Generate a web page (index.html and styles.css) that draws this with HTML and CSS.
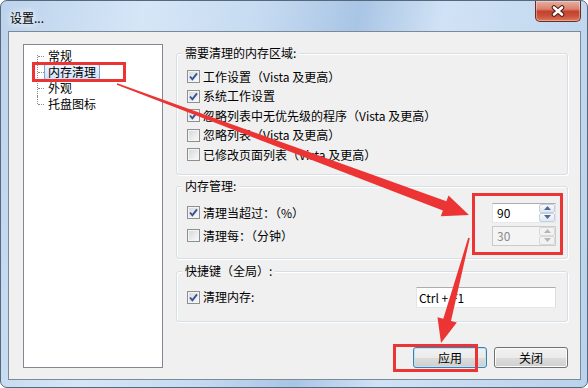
FILE: index.html
```html
<!DOCTYPE html>
<html lang="zh-CN">
<head>
    <meta charset="UTF-8">
    <meta name="viewport" content="width=device-width, initial-scale=1.0">
    <title>设置...</title>
    <link rel="stylesheet" href="styles.css">
</head>
<body>
    <div class="window">
        <div class="titlebar">
            <span class="title">设置...</span>
            <div class="close-btn">
                <svg width="16" height="12" viewBox="0 0 16 12">
                    <path d="M4 2.5 L12 9.5 M12 2.5 L4 9.5" stroke="#4a1d14" stroke-width="4.6" stroke-linecap="round"/>
                    <path d="M4 2.5 L12 9.5 M12 2.5 L4 9.5" stroke="#fff" stroke-width="2.6" stroke-linecap="round"/>
                </svg>
            </div>
        </div>

        <div class="client">
            <ul class="tree">
                <li><span>常规</span></li>
                <li><span class="selected">内存清理</span></li>
                <li><span>外观</span></li>
                <li><span>托盘图标</span></li>
            </ul>

            <div class="panel">
                <div class="group group-areas">
                    <div class="group-title">需要清理的内存区域:</div>
                    <div class="rows">
                        <div class="row"><span class="cb"><svg width="11" height="11" viewBox="0 0 11 11"><path d="M2 5.5 L4.4 8.3 L9 2.3" fill="none" stroke="#34529a" stroke-width="1.9"/></svg></span>工作设置（Vista 及更高）</div>
                        <div class="row"><span class="cb"><svg width="11" height="11" viewBox="0 0 11 11"><path d="M2 5.5 L4.4 8.3 L9 2.3" fill="none" stroke="#34529a" stroke-width="1.9"/></svg></span>系统工作设置</div>
                        <div class="row"><span class="cb"><svg width="11" height="11" viewBox="0 0 11 11"><path d="M2 5.5 L4.4 8.3 L9 2.3" fill="none" stroke="#34529a" stroke-width="1.9"/></svg></span>忽略列表中无优先级的程序（Vista 及更高）</div>
                        <div class="row"><span class="cb"></span>忽略列表（Vista 及更高）</div>
                        <div class="row"><span class="cb"></span>已修改页面列表（Vista 及更高）</div>
                    </div>
                </div>

                <div class="group group-memory">
                    <div class="group-title">内存管理:</div>
                    <div class="rows">
                        <div class="row"><span class="cb"><svg width="11" height="11" viewBox="0 0 11 11"><path d="M2 5.5 L4.4 8.3 L9 2.3" fill="none" stroke="#34529a" stroke-width="1.9"/></svg></span>清理当超过：（%）
                            <div class="spin">
                                <span class="spin-val">90</span>
                                <span class="spin-btns">
                                    <span><svg width="7" height="4" viewBox="0 0 7 4"><path d="M0 4 L3.5 0 L7 4 Z" fill="#4d6a9c"/></svg></span>
                                    <span><svg width="7" height="4" viewBox="0 0 7 4"><path d="M0 0 L3.5 4 L7 0 Z" fill="#4d6a9c"/></svg></span>
                                </span>
                            </div>
                        </div>
                        <div class="row"><span class="cb"></span>清理每：（分钟）
                            <div class="spin disabled">
                                <span class="spin-val">30</span>
                                <span class="spin-btns">
                                    <span><svg width="7" height="4" viewBox="0 0 7 4"><path d="M0 4 L3.5 0 L7 4 Z" fill="#b5b5b5"/></svg></span>
                                    <span><svg width="7" height="4" viewBox="0 0 7 4"><path d="M0 0 L3.5 4 L7 0 Z" fill="#b5b5b5"/></svg></span>
                                </span>
                            </div>
                        </div>
                    </div>
                </div>

                <div class="group group-hotkey">
                    <div class="group-title">快捷键（全局）:</div>
                    <div class="rows">
                        <div class="row"><span class="cb"><svg width="11" height="11" viewBox="0 0 11 11"><path d="M2 5.5 L4.4 8.3 L9 2.3" fill="none" stroke="#34529a" stroke-width="1.9"/></svg></span>清理内存:
                            <div class="hotkey">Ctrl + F1</div>
                        </div>
                    </div>
                </div>

                <div class="actions">
                    <button class="btn btn-default">应用</button>
                    <button class="btn">关闭</button>
                </div>
            </div>
        </div>
    </div>

    <svg class="annotations" width="588" height="388" viewBox="0 0 588 388">
        <rect x="33.5" y="63.5" width="91" height="17" fill="none" stroke="#ec3434" stroke-width="3"/>
        <rect x="473.5" y="194.5" width="88" height="59" fill="none" stroke="#ec3434" stroke-width="3"/>
        <rect x="394.5" y="345.5" width="82" height="25" fill="none" stroke="#ec3434" stroke-width="3"/>
        <polygon points="117.3,83.2 446.4,201.3 448.5,195.6 469,215 440.8,216.2 442.9,210.6 116.7,84.8" fill="#ec3434"/>
        <polygon points="468.2,237.8 443.3,318.8 437.5,317.2 441,343 456.8,322.4 451,320.9 469.8,238.2" fill="#ec3434"/>
    </svg>
</body>
</html>
```

FILE: styles.css
```css
* {
    box-sizing: border-box;
}

body {
    margin: 0;
    width: 588px;
    height: 388px;
    position: relative;
    overflow: hidden;
    font-family: "Noto Sans CJK SC", "Noto Sans", sans-serif;
    font-size: 12px;
    line-height: 16px;
    color: #000;
    background: #fff;
}

.window {
    width: 588px;
    height: 388px;
    display: flex;
    flex-direction: column;
    border: 1px solid #56687c;
    border-radius: 7px;
    background: linear-gradient(100deg, #bcd3ec 0%, #d5e6f7 22%, #c6dbf1 40%, #a9c5e5 55%, #d0e2f5 68%, #bad2ec 100%);
}

.titlebar {
    height: 30px;
    display: flex;
    align-items: flex-start;
    padding-left: 9px;
}

.title {
    margin-top: 9px;
    text-shadow: 0 0 6px #fff, 0 0 10px #fff;
}

.close-btn {
    margin-left: auto;
    margin-right: 6px;
    width: 46px;
    height: 21px;
    display: flex;
    align-items: center;
    justify-content: center;
    border: 1px solid #6a2b22;
    border-top: none;
    border-radius: 0 0 5px 5px;
    background: linear-gradient(#eaae9f, #d8836f 40%, #c4432d 52%, #c9503a 75%, #dc7a5c);
    box-shadow: inset 0 0 0 1px rgba(255, 255, 255, 0.35);
}

.client {
    flex: 1;
    margin: 0 6px 7px 7px;
    padding: 12px 12px 11px 14px;
    display: flex;
    gap: 13px;
    border: 1px solid #7c8a98;
    background: #f0f0f0;
}

/* left tree */
.tree {
    width: 140px;
    height: 324px;
    margin: 0;
    padding: 3px 0 0 13px;
    list-style: none;
    background: #fff;
    border: 1px solid #828790;
}

.tree li {
    position: relative;
    height: 16px;
    padding-left: 7px;
}

.tree li::before {
    content: "";
    position: absolute;
    left: 0;
    top: 0;
    bottom: 0;
    border-left: 1px dotted #8c8c8c;
}

.tree li:first-child::before {
    top: 7px;
}

.tree li:last-child::before {
    bottom: 8px;
}

.tree li::after {
    content: "";
    position: absolute;
    left: 1px;
    top: 8px;
    width: 6px;
    border-top: 1px dotted #8c8c8c;
}

.tree span {
    display: inline-block;
    height: 16px;
    line-height: 14px;
    padding: 0 3px;
    border: 1px solid transparent;
    border-radius: 2px;
}

.tree .selected {
    border-color: #7da2ce;
    background: linear-gradient(#eef5fe, #cde2fc);
}

/* right panel */
.panel {
    width: 392px;
    display: flex;
    flex-direction: column;
}

.group {
    border: 1px solid #d5dfe5;
    border-radius: 3px;
    box-shadow: inset 1px 1px 0 #fff, 1px 1px 0 #fff;
}

.group-title {
    width: fit-content;
    margin: -9px 0 0 5px;
    padding: 0 3px;
    background: #f0f0f0;
}

.group-areas {
    margin-top: 9px;
    height: 122px;
}

.group-memory {
    margin-top: 11px;
    height: 73px;
}

.group-hotkey {
    margin-top: 12px;
    height: 51px;
}

.rows {
    margin-top: 6px;
}

.row {
    display: flex;
    align-items: center;
    height: 19.5px;
    padding-left: 10px;
}

.group-memory .rows {
    margin-top: 7px;
}

.group-memory .row {
    height: 23px;
}

.group-hotkey .row {
    height: 24px;
}

.cb {
    flex: none;
    width: 13px;
    height: 13px;
    margin-right: 3px;
    border: 1px solid #8e8f8f;
    background: linear-gradient(135deg, #d4d6d9, #fbfbfb);
    box-shadow: inset 0 0 0 1px #f4f4f4;
}

.cb svg {
    display: block;
}

.spin {
    width: 64px;
    height: 20px;
    margin-left: auto;
    margin-right: 11px;
    display: flex;
    border: 1px solid;
    border-color: #abadb3 #dbdfe6 #e3e9ef #e2e3ea;
    background: #fff;
}

.spin-val {
    flex: 1;
    padding-left: 4px;
    line-height: 18px;
}

.spin-btns {
    width: 16px;
    display: flex;
    flex-direction: column;
}

.spin-btns span {
    flex: 1;
    display: flex;
    align-items: center;
    justify-content: center;
    border: 1px solid #c5d0dc;
    border-radius: 2px;
    background: linear-gradient(#f7f9fb, #e1e7ee);
}

.spin.disabled {
    color: #8a8a8a;
    background: #f4f4f4;
    border-color: #cacaca;
}

.spin.disabled .spin-btns span {
    border-color: #d9d9d9;
    background: #f2f2f2;
}

.hotkey {
    width: 140px;
    height: 21px;
    margin-left: auto;
    margin-right: 11px;
    padding-left: 2px;
    line-height: 19px;
    border: 1px solid;
    border-color: #abadb3 #dbdfe6 #e3e9ef #e2e3ea;
    background: #fff;
}

.actions {
    margin-top: auto;
    display: flex;
    justify-content: flex-end;
    gap: 7px;
}

.btn {
    width: 74px;
    height: 21px;
    padding: 0;
    font: inherit;
    line-height: 19px;
    color: #000;
    border: 1px solid #707070;
    border-radius: 3px;
    background: linear-gradient(#f2f2f2, #ebebeb 50%, #dddddd 50%, #cfcfcf);
    box-shadow: inset 0 0 0 1px #fcfcfc;
}

.btn-default {
    border-color: #3c7fb1;
    box-shadow: inset 0 0 0 1px #bfe4f8;
}

.annotations {
    position: absolute;
    left: 0;
    top: 0;
}
```
